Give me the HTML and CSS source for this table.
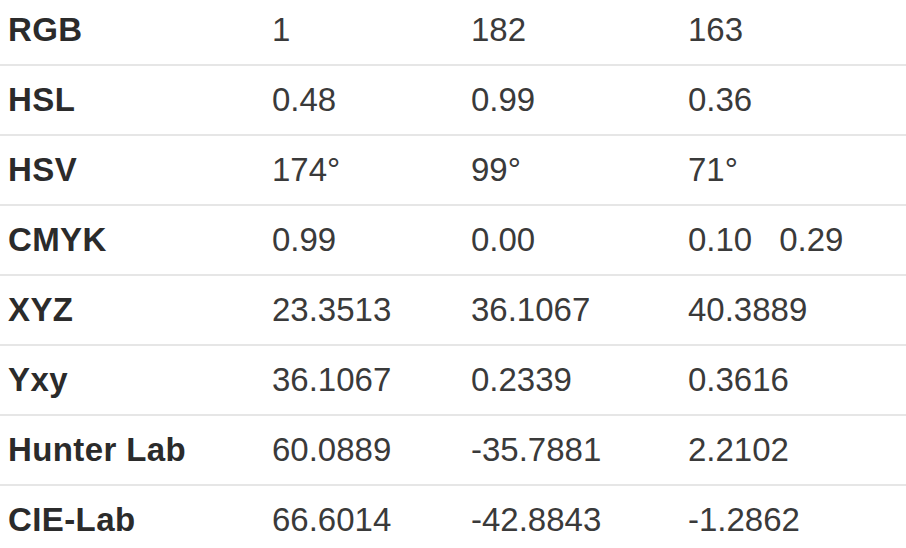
FILE: index.html
```html
<!DOCTYPE html>
<html>
<head>
<meta charset="utf-8">
<link rel="stylesheet" href="styles.css">
</head>
<body>
<div class="table">
  <div class="row"><div class="label">RGB</div><div class="cell">1</div><div class="cell">182</div><div class="cell">163</div></div>
  <div class="row"><div class="label">HSL</div><div class="cell">0.48</div><div class="cell">0.99</div><div class="cell">0.36</div></div>
  <div class="row"><div class="label">HSV</div><div class="cell">174°</div><div class="cell">99°</div><div class="cell">71°</div></div>
  <div class="row"><div class="label">CMYK</div><div class="cell">0.99</div><div class="cell">0.00</div><div class="cell"><span>0.10</span><span class="extra">0.29</span></div></div>
  <div class="row"><div class="label">XYZ</div><div class="cell">23.3513</div><div class="cell">36.1067</div><div class="cell">40.3889</div></div>
  <div class="row"><div class="label">Yxy</div><div class="cell">36.1067</div><div class="cell">0.2339</div><div class="cell">0.3616</div></div>
  <div class="row"><div class="label">Hunter Lab</div><div class="cell">60.0889</div><div class="cell">-35.7881</div><div class="cell">2.2102</div></div>
  <div class="row"><div class="label">CIE-Lab</div><div class="cell">66.6014</div><div class="cell">-42.8843</div><div class="cell">-1.2862</div></div>
</div>
</body>
</html>
```
FILE: styles.css
```css
html, body {
  margin: 0;
  padding: 0;
  background: #ffffff;
}
body {
  font-family: "Liberation Sans", Arial, sans-serif;
  color: #3a3a3a;
  overflow: hidden;
}
.table {
  margin-top: -4px;
}
.row {
  display: grid;
  grid-template-columns: 264px 199px 217px 1fr;
  align-items: center;
  height: 68px;
  border-bottom: 2px solid #e6e6e6;
  padding-left: 8px;
  font-size: 33px;
}
.label {
  font-weight: bold;
  color: #2b2b2b;
  letter-spacing: 0.4px;
}
.cell {
  display: flex;
  gap: 27px;
}
```
